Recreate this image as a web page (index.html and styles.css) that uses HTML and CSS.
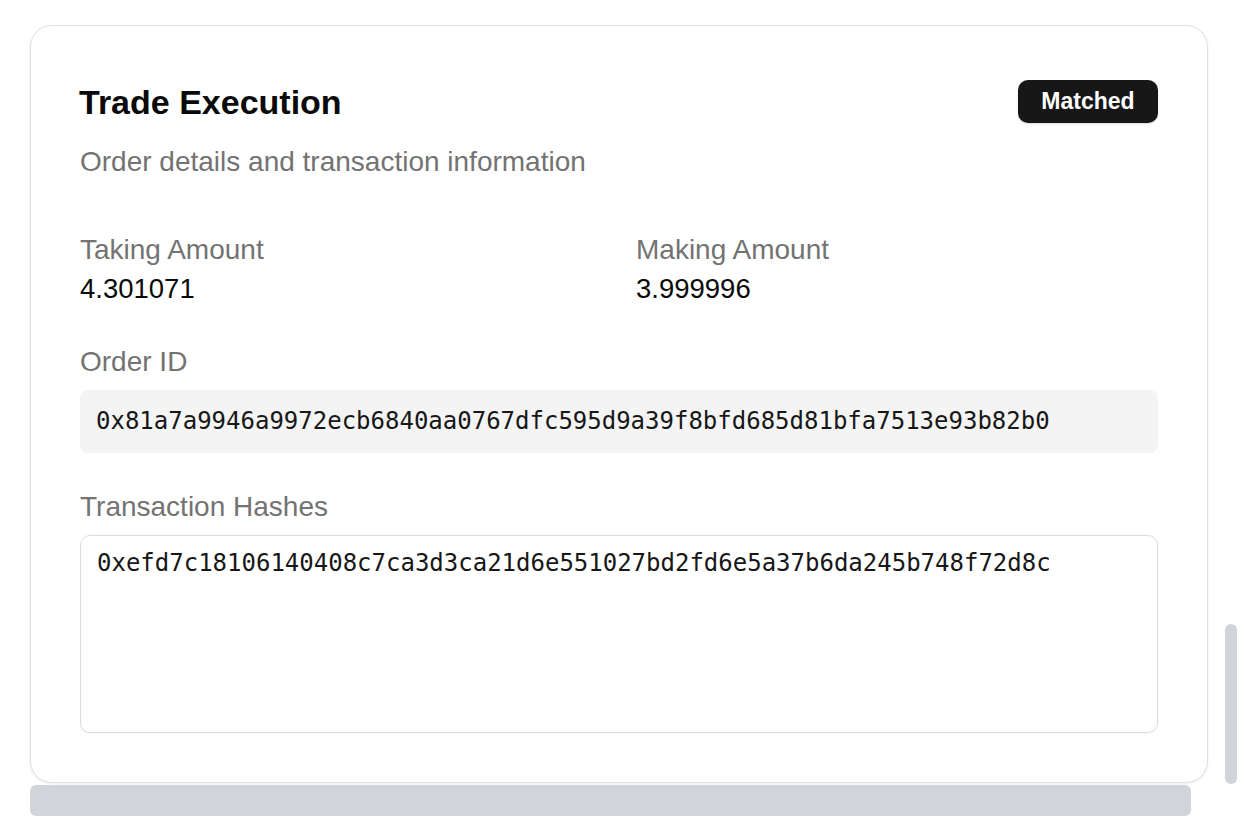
FILE: index.html
```html
<!DOCTYPE html>
<html lang="en">
<head>
<meta charset="utf-8">
<title>Trade Execution</title>
<link rel="stylesheet" href="styles.css">
</head>
<body>
<div class="page">
  <section class="card">
    <header class="card-header">
      <h1 class="title">Trade Execution</h1>
      <span class="badge">Matched</span>
    </header>
    <p class="subtitle">Order details and transaction information</p>

    <div class="amounts">
      <div class="field">
        <div class="label">Taking Amount</div>
        <div class="value">4.301071</div>
      </div>
      <div class="field">
        <div class="label">Making Amount</div>
        <div class="value">3.999996</div>
      </div>
    </div>

    <div class="block">
      <div class="label">Order ID</div>
      <div class="code-box">0x81a7a9946a9972ecb6840aa0767dfc595d9a39f8bfd685d81bfa7513e93b82b0</div>
    </div>

    <div class="block">
      <div class="label">Transaction Hashes</div>
      <div class="hash-box">0xefd7c18106140408c7ca3d3ca21d6e551027bd2fd6e5a37b6da245b748f72d8c</div>
    </div>
  </section>
  <div class="next-bar"></div>
  <div class="scroll-thumb"></div>
</div>
</body>
</html>
```

FILE: styles.css
```css
html, body {
  margin: 0;
  padding: 0;
  background: #ffffff;
}

body {
  font-family: "Liberation Sans", Arial, Helvetica, sans-serif;
  color: #0a0a0a;
  width: 1254px;
  height: 838px;
  overflow: hidden;
}

.page {
  position: relative;
  padding: 25px 0 0 30px;
}

.card {
  box-sizing: border-box;
  width: 1178px;
  background: #ffffff;
  border: 1px solid #e0e0e0;
  border-radius: 22px;
  box-shadow: 0 1px 3px rgba(0, 0, 0, 0.08);
  padding: 54px 49px 49px 49px;
  display: flex;
  flex-direction: column;
}

.card-header {
  display: flex;
  align-items: center;
  justify-content: space-between;
  height: 43px;
}

.title {
  margin: 0 0 0 -1px;
  font-size: 34px;
  font-weight: 700;
  line-height: 40px;
  color: #0a0a0a;
}

.badge {
  box-sizing: border-box;
  height: 43px;
  width: 140px;
  display: flex;
  align-items: center;
  justify-content: center;
  background: #171717;
  color: #ffffff;
  font-size: 23px;
  font-weight: 700;
  border-radius: 10px;
  box-shadow: 0 1px 2px rgba(0, 0, 0, 0.15);
}

.subtitle {
  margin: 21px 0 0 0;
  font-size: 28px;
  line-height: 36px;
  color: #737373;
}

.amounts {
  margin-top: 52px;
  display: grid;
  grid-template-columns: 1fr 1fr;
  column-gap: 34px;
}

.label {
  font-size: 28px;
  line-height: 36px;
  color: #737373;
}

.value {
  font-size: 27.5px;
  line-height: 42px;
  color: #0a0a0a;
}

.block {
  margin-top: 34px;
  display: flex;
  flex-direction: column;
  gap: 10px;
}

.block + .block {
  margin-top: 36px;
}

.code-box {
  background: #f4f4f4;
  border-radius: 8px;
  padding: 16px 16px;
  font-family: "DejaVu Sans Mono", "Liberation Mono", monospace;
  font-size: 24px;
  line-height: 31px;
  color: #171717;
  white-space: nowrap;
}

.hash-box {
  box-sizing: border-box;
  height: 198px;
  border: 1px solid #dcdcdc;
  border-radius: 10px;
  padding: 13px 16px;
  font-family: "DejaVu Sans Mono", "Liberation Mono", monospace;
  font-size: 24px;
  line-height: 28px;
  color: #171717;
  white-space: nowrap;
  box-shadow: 0 1px 2px rgba(0, 0, 0, 0.04);
}

.next-bar {
  margin-top: 2px;
  width: 1161px;
  height: 31px;
  background: #d1d4d8;
  border-radius: 6px;
}

.scroll-thumb {
  position: absolute;
  left: 1225px;
  top: 624px;
  width: 12px;
  height: 160px;
  border-radius: 6px;
  background: #d1d4d8;
}
```
